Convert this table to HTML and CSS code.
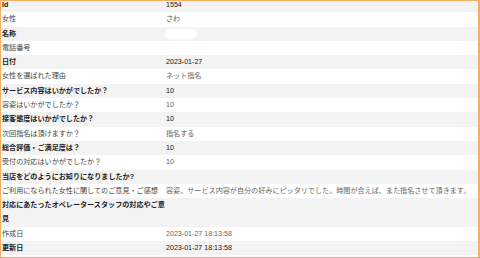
FILE: index.html
```html
<!DOCTYPE html>
<html lang="ja">
<head>
<meta charset="utf-8">
<link rel="stylesheet" href="styles.css">
</head>
<body>
<div class="frame">
  <table class="detail">
    <tr class="odd"><th>Id</th><td>1554</td></tr>
    <tr><th>女性</th><td>さわ</td></tr>
    <tr class="odd"><th>名称</th><td><span class="blur"></span></td></tr>
    <tr><th>電話番号</th><td></td></tr>
    <tr class="odd"><th>日付</th><td>2023-01-27</td></tr>
    <tr><th>女性を選ばれた理由</th><td>ネット指名</td></tr>
    <tr class="odd"><th>サービス内容はいかがでしたか？</th><td>10</td></tr>
    <tr><th>容姿はいかがでしたか？</th><td>10</td></tr>
    <tr class="odd"><th>接客態度はいかがでしたか？</th><td>10</td></tr>
    <tr><th>次回指名は頂けますか？</th><td>指名する</td></tr>
    <tr class="odd"><th>総合評価・ご満足度は？</th><td>10</td></tr>
    <tr><th>受付の対応はいかがでしたか？</th><td>10</td></tr>
    <tr class="odd"><th>当店をどのようにお知りになりましたか?</th><td></td></tr>
    <tr><th>ご利用になられた女性に関してのご意見・ご感想</th><td>容姿、サービス内容が自分の好みにピッタリでした。時間が合えば、また指名させて頂きます。</td></tr>
    <tr class="odd"><th>対応にあたったオペレータースタッフの対応やご意見</th><td></td></tr>
    <tr><th>作成日</th><td>2023-01-27 18:13:58</td></tr>
    <tr class="odd"><th>更新日</th><td>2023-01-27 18:13:58</td></tr>
  </table>
</div>
</body>
</html>
```
FILE: styles.css
```css
html, body {
  margin: 0;
  padding: 0;
  background: #ffffff;
}
.frame {
  box-sizing: border-box;
  width: 480px;
  height: 258px;
  border: 1px solid #f3b062;
  border-right-width: 2px;
  overflow: hidden;
  background: #ffffff;
}
.detail {
  width: 100%;
  border-collapse: collapse;
  margin-top: -3px;
  font-family: "Liberation Sans", "Noto Sans CJK JP", sans-serif;
  font-size: 7.1px;
  line-height: 14.3px;
  color: #666666;
}
.detail th, .detail td {
  padding: 0 0 0 1px;
  text-align: left;
  vertical-align: top;
  font-weight: normal;
  white-space: normal;
}
.detail th {
  width: 163px;
  color: #444444;
}
.detail tr.odd {
  background: #f3f3f3;
}
.detail tr.odd th {
  font-weight: bold;
  color: #222222;
}
.detail tr.odd td {
  color: #151515;
}
.blur {
  display: inline-block;
  width: 30px;
  height: 8px;
  margin-top: 3px;
  border-radius: 4px;
  background: #ffffff;
  box-shadow: 0 0 2px 1px #ffffff;
  vertical-align: top;
}
```
